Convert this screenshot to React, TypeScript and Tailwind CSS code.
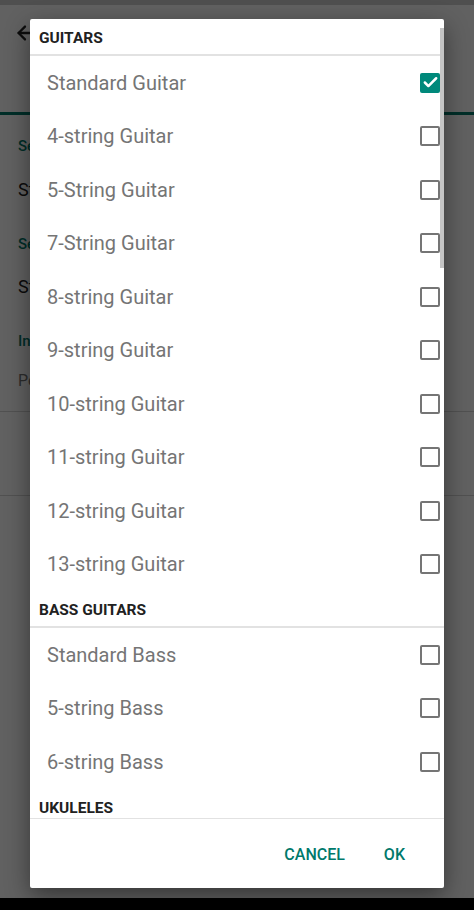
import { Check, ArrowLeft } from 'lucide-react';

type Section = {
  title: string;
  items: { name: string; checked?: boolean }[];
};

const sections: Section[] = [
  {
    title: 'GUITARS',
    items: [
      { name: 'Standard Guitar', checked: true },
      { name: '4-string Guitar' },
      { name: '5-String Guitar' },
      { name: '7-String Guitar' },
      { name: '8-string Guitar' },
      { name: '9-string Guitar' },
      { name: '10-string Guitar' },
      { name: '11-string Guitar' },
      { name: '12-string Guitar' },
      { name: '13-string Guitar' },
    ],
  },
  {
    title: 'BASS GUITARS',
    items: [{ name: 'Standard Bass' }, { name: '5-string Bass' }, { name: '6-string Bass' }],
  },
  {
    title: 'UKULELES',
    items: [{ name: 'Standard Ukulele' }, { name: 'Baritone Ukulele' }],
  },
];

const CheckBox = ({ checked }: { checked?: boolean }) =>
  checked ? (
    <div className="w-[20px] h-[20px] rounded-[2px] bg-[#00897b] flex items-center justify-center">
      <Check className="w-[17px] h-[17px] text-white" strokeWidth={3.5} />
    </div>
  ) : (
    <div className="w-[20px] h-[20px] rounded-[2px] border-2 border-[#757575]" />
  );

// アプリ本体（ダイアログの後ろ）
const Background = () => (
  <div className="h-[910px] bg-white flex flex-col">
    <div className="h-[5px] bg-[#cfcfcf]" />
    <div className="h-[56px] flex items-center pl-[14px]">
      <ArrowLeft className="w-[22px] h-[22px] text-[#212121]" strokeWidth={2.5} />
    </div>
    <div className="h-[54px] border-b-[3px] border-[#00796b]" />
    <div className="pl-[18px] pt-[20px] text-[#00796b] text-[15px] font-medium">Select instrument</div>
    <div className="pl-[18px] pt-[18px] text-[#212121] text-[18px]">Standard Guitar</div>
    <div className="pl-[18px] pt-[30px] text-[#00796b] text-[15px] font-medium">Select tuning</div>
    <div className="pl-[18px] pt-[18px] text-[#212121] text-[18px]">Standard</div>
    <div className="pl-[18px] pt-[30px] text-[#00796b] text-[15px] font-medium">Instrument options</div>
    <div className="pl-[18px] pt-[16px] text-[#757575] text-[16px]">Per instrument</div>
    <div className="mt-[18px] h-[1px] bg-[#d6d6d6]" />
    <div className="h-[83px]" />
    <div className="h-[1px] bg-[#d6d6d6]" />
  </div>
);

export default function App() {
  return (
    <div className="relative w-[474px] h-[910px] overflow-hidden" style={{ fontFamily: 'Roboto, "Noto Sans", sans-serif' }}>
      <Background />
      <div className="absolute inset-0 bg-black/[0.62]" />
      <div className="absolute left-0 right-0 bottom-0 h-[12px] bg-black" />

      {/* ダイアログ */}
      <div className="absolute left-[30px] top-[19px] w-[414px] h-[869px] bg-white rounded-[2px] shadow-[0_8px_24px_rgba(0,0,0,0.45)] flex flex-col overflow-hidden">
        <div className="relative h-[799px] overflow-hidden">
          {sections.map((s) => (
            <div key={s.title}>
              <div className="h-[37px] flex items-center pl-[9px] pt-[5px] border-b-2 border-[#e2e2e2] text-[15.5px] font-bold text-[#212121]">
                {s.title}
              </div>
              {s.items.map((it) => (
                <div key={it.name} className="h-[53.5px] flex items-center justify-between pl-[17px] pr-[4px]">
                  <span className="text-[20px] text-[#757575]">{it.name}</span>
                  <CheckBox checked={it.checked} />
                </div>
              ))}
            </div>
          ))}
          <div className="absolute right-0 top-[9px] w-[4px] h-[240px] bg-[#c4c4c4]" />
        </div>
        <div className="h-[1px] bg-[#e2e2e2]" />
        <div className="flex-1 flex items-center justify-end gap-[39px] pr-[39px] pt-[3px]">
          <span className="text-[16px] font-medium text-[#00796b]">CANCEL</span>
          <span className="text-[16px] font-medium text-[#00796b]">OK</span>
        </div>
      </div>
    </div>
  );
}
